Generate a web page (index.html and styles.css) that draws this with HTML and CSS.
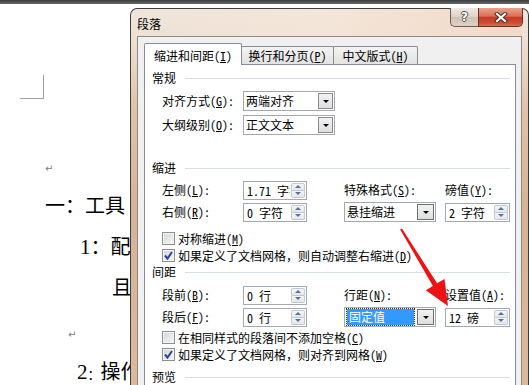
FILE: index.html
```html
<!DOCTYPE html>
<html lang="zh-CN">
<head>
<meta charset="utf-8">
<title>段落</title>
<link rel="stylesheet" href="styles.css">
</head>
<body>
<div class="topbar"></div>
<div class="desk">
  <div class="doc">
    <div class="corner"></div>
    <div class="doc-lines">
      <div class="dl l-ret1"><span class="ret">↵</span></div>
      <div class="dl l-one">一：工具</div>
      <div class="dl l-two"><span class="num">1</span>：配</div>
      <div class="dl l-three">且</div>
      <div class="dl l-ret2"><span class="ret">↵</span></div>
      <div class="dl l-four"><span class="num">2</span><span class="colon">：</span>操作</div>
    </div>
  </div>

  <div class="dialog">
    <div class="titlebar">
      <span class="title">段落</span>
      <div class="caption">
        <div class="cap-help">?</div>
        <div class="cap-close">
          <svg width="14" height="11" viewBox="0 0 14 11"><path d="M3 2 L11 9 M11 2 L3 9" stroke="#4a3a36" stroke-width="4.2" stroke-linecap="square" fill="none"/><path d="M3 2 L11 9 M11 2 L3 9" stroke="#fff" stroke-width="2" stroke-linecap="square" fill="none"/></svg>
        </div>
      </div>
    </div>
    <div class="client">
      <div class="tabs">
        <div class="tab active t1">缩进和间距(<u>I</u>)</div>
        <div class="tab t2">换行和分页(<u>P</u>)</div>
        <div class="tab t3">中文版式(<u>H</u>)</div>
      </div>
      <div class="page">
        <div class="head h1">常规</div>
        <div class="general">
          <div class="lbl">对齐方式(<u>G</u>):</div>
          <div class="combo c92"><span class="val">两端对齐</span><span class="drop"></span></div>
          <div class="lbl">大纲级别(<u>O</u>):</div>
          <div class="combo c92"><span class="val">正文文本</span><span class="drop"></span></div>
        </div>

        <div class="head h2">缩进</div>
        <div class="grid g1">
          <div class="lbl">左侧(<u>L</u>):</div>
          <div class="spin s64"><span class="val">1.71 字符</span><span class="btns"><span class="up"></span><span class="down"></span></span></div>
          <div class="lbl">特殊格式(<u>S</u>):</div>
          <div class="lbl">磅值(<u>Y</u>):</div>
          <div class="lbl">右侧(<u>R</u>):</div>
          <div class="spin s64"><span class="val">0 字符</span><span class="btns"><span class="up"></span><span class="down"></span></span></div>
          <div class="combo c92 big"><span class="val">悬挂缩进</span><span class="drop"></span></div>
          <div class="spin s65"><span class="val">2 字符</span><span class="btns"><span class="up"></span><span class="down"></span></span></div>
        </div>
        <div class="checks k1">
          <div class="check"><span class="box"></span><span>对称缩进(<u>M</u>)</span></div>
          <div class="check"><span class="box on"><svg width="11" height="11" viewBox="0 0 11 11"><path d="M2 5.5 L4.5 8.5 L9 2" stroke="#2e4793" stroke-width="2" fill="none"/></svg></span><span>如果定义了文档网格，则自动调整右缩进(<u>D</u>)</span></div>
        </div>

        <div class="head h3">间距</div>
        <div class="grid g2">
          <div class="lbl">段前(<u>B</u>):</div>
          <div class="spin s64"><span class="val">0 行</span><span class="btns"><span class="up"></span><span class="down"></span></span></div>
          <div class="lbl">行距(<u>N</u>):</div>
          <div class="lbl">设置值(<u>A</u>):</div>
          <div class="lbl">段后(<u>F</u>):</div>
          <div class="spin s64"><span class="val">0 行</span><span class="btns"><span class="up"></span><span class="down"></span></span></div>
          <div class="combo c92 big"><span class="val"><span class="sel">固定值</span></span><span class="drop"></span></div>
          <div class="spin s65"><span class="val">12 磅</span><span class="btns"><span class="up"></span><span class="down"></span></span></div>
        </div>
        <div class="checks k2">
          <div class="check"><span class="box"></span><span>在相同样式的段落间不添加空格(<u>C</u>)</span></div>
          <div class="check"><span class="box on"><svg width="11" height="11" viewBox="0 0 11 11"><path d="M2 5.5 L4.5 8.5 L9 2" stroke="#2e4793" stroke-width="2" fill="none"/></svg></span><span>如果定义了文档网格，则对齐到网格(<u>W</u>)</span></div>
        </div>

        <div class="head h4">预览</div>
      </div>
    </div>
  </div>
</div>

<svg class="arrow" width="529" height="385" viewBox="0 0 529 385">
  <polygon points="400.1,229.5 401.9,228.5 437.1,283.3 444.5,279 448,306 425.8,290.3 432.9,285.9" fill="#ee1212"/>
</svg>
</body>
</html>
```

FILE: styles.css
```css
* { box-sizing: border-box; }

body {
  margin: 0;
  width: 529px;
  height: 385px;
  overflow: hidden;
  position: relative;
  background: #fff;
  color: #000;
  font-family: "Noto Sans Mono CJK SC", "Noto Sans CJK SC", "Noto Sans", sans-serif;
  font-size: 12px;
}

u { text-decoration: underline; text-underline-offset: 1px; }

.topbar {
  height: 4px;
  background: linear-gradient(#3c3c3c, #666);
}

.desk {
  display: flex;
  height: 381px;
}

/* ---------- document behind ---------- */
.doc {
  width: 130px;
  flex: none;
  overflow: hidden;
  padding-top: 71px;
}

.corner {
  margin-left: 20px;
  width: 24px;
  height: 24px;
  border-right: 1px solid #a0a0a0;
  border-bottom: 1px solid #a0a0a0;
}

.doc-lines {
  margin-top: 44px;
  font-family: "Noto Sans CJK SC", serif;
  font-size: 20px;
  line-height: 41px;
  white-space: nowrap;
}

.dl { height: 41px; }
.num { font-family: "Liberation Serif", serif; font-size: 21px; }
.colon { font-size: 13px; }
.ret { font-family: "DejaVu Sans", sans-serif; font-size: 10px; color: #7c7c7c; }

.l-ret1 { padding-left: 45px; }
.l-one { padding-left: 45px; }
.l-two { padding-left: 80px; }
.l-three { padding-left: 112px; }
.l-ret2 { padding-left: 68px; padding-top: 2px; }
.l-four { padding-left: 77px; padding-top: 2px; }

/* ---------- dialog ---------- */
.dialog {
  width: 399px;
  flex: none;
  margin-top: 4px;
  border: 1px solid #3d3d3d;
  border-bottom: 0;
  border-radius: 7px 7px 0 0;
  padding: 0 6px;
  display: flex;
  flex-direction: column;
  background: linear-gradient(180deg, #eee5dc 0, #efe1d4 28px, #e0c3a7 100px, #d6b394 200px, #dbb99b 100%);
}

.titlebar {
  height: 27px;
  flex: none;
  display: flex;
  justify-content: space-between;
  align-items: flex-start;
  background: linear-gradient(90deg, rgba(255,255,255,0) 0, rgba(246,230,216,0.6) 50%, rgba(244,214,194,0.7) 100%);
}

.title {
  line-height: 27px;
  padding-top: 1px;
  font-size: 12px;
}

.caption {
  display: flex;
  margin-top: -1px;
  margin-right: -1px;
}

.cap-help {
  width: 28px;
  height: 19px;
  border: 1px solid #6a5b50;
  border-right: 0;
  border-top: 0;
  border-radius: 0 0 0 5px;
  background: linear-gradient(#f1e9e2, #ddd2c7 48%, #cfc2b5 52%, #ddd1c5);
  display: flex;
  align-items: center;
  justify-content: center;
  font-family: "DejaVu Sans", sans-serif;
  font-weight: bold;
  font-size: 12px;
  color: #fff;
  text-shadow: 1px 0 #505050, -1px 0 #505050, 0 1px #505050, 0 -1px #505050;
}

.cap-close {
  width: 45px;
  height: 19px;
  border: 1px solid #5a3329;
  border-top: 0;
  border-radius: 0 0 5px 0;
  background: linear-gradient(#eaa28c, #da7258 45%, #c73c22 52%, #cc4a30 80%, #da6e4f);
  display: flex;
  align-items: center;
  justify-content: center;
}

.client {
  flex: 1;
  background: #f0f0f0;
  border: 1px solid #8a8a8a;
  border-bottom: 0;
  padding: 6px 5px 0 6px;
  display: flex;
  flex-direction: column;
}

.tabs {
  display: flex;
  align-items: flex-end;
  height: 21px;
  flex: none;
  position: relative;
  z-index: 1;
}

.tab {
  height: 18px;
  border: 1px solid #898c95;
  border-bottom: 0;
  background: linear-gradient(#f3f3f3, #e2e2e2);
  line-height: 17px;
  text-align: center;
  white-space: nowrap;
  border-radius: 2px 2px 0 0;
}

.tab.active {
  height: 22px;
  margin-bottom: -1px;
  background: #fff;
  padding-top: 3px;
}

.t1 { width: 98px; }
.t2 { width: 93px; margin-left: -1px; }
.t3 { width: 85px; margin-left: -1px; }

.page {
  flex: 1;
  background: #fff;
  border: 1px solid #898c95;
  border-bottom: 0;
  padding: 0 5px 0 7px;
}

.head {
  display: flex;
  align-items: center;
  height: 16px;
  line-height: 16px;
}

.head::after {
  content: "";
  flex: 1;
  height: 1px;
  margin-left: 9px;
  background: #d5dfe5;
}

.h1 { margin-top: 5px; }
.h2 { margin-top: 25px; }
.h3 { margin-top: 0; }
.h4 { margin-top: 6px; }

.lbl {
  line-height: 20px;
  white-space: nowrap;
}

.general {
  margin: 5px 0 0 10px;
  display: grid;
  grid-template-columns: 81px 92px;
  grid-auto-rows: 20px;
  row-gap: 4px;
}

.grid {
  margin-left: 10px;
  display: grid;
  grid-template-columns: 81px 101px 101px 65px;
  grid-template-rows: 20px 20px;
  row-gap: 2px;
  align-items: center;
}

.g1 { margin-top: 4px; }
.g2 { margin-top: 5px; }

/* combo box */
.combo {
  height: 20px;
  border: 1px solid #a3a9b1;
  background: #fff;
  display: flex;
}

.c92 { width: 92px; }

.combo .val {
  flex: 1;
  padding: 1px 2px;
  line-height: 16px;
  white-space: nowrap;
  overflow: hidden;
}

.combo .drop {
  width: 15px;
  margin: 1px;
  border: 1px solid #8a8a8a;
  background: linear-gradient(#f2f2f2, #dedede);
  display: flex;
  align-items: center;
  justify-content: center;
}

.combo.big .drop { width: 17px; border-color: #6f6f6f; }

.combo .drop::before {
  content: "";
  border-left: 3px solid transparent;
  border-right: 3px solid transparent;
  border-top: 3px solid #000;
}

.sel {
  display: block;
  background: #3399ff;
  color: #fff;
  outline: 1px dotted #333;
  padding-left: 2px;
  line-height: 16px;
}

/* spinner */
.spin {
  height: 19px;
  border: 1px solid #a3a9b1;
  background: #fff;
  display: flex;
}

.s64 { width: 64px; }
.s65 { width: 65px; }

.spin .val {
  flex: 1;
  padding-left: 3px;
  line-height: 17px;
  white-space: nowrap;
  overflow: hidden;
}

.spin .btns {
  width: 14px;
  margin: 1px;
  display: flex;
  flex-direction: column;
}

.spin .up, .spin .down {
  flex: 1;
  border: 1px solid #c3c9d2;
  background: linear-gradient(#f6f6f6, #e4e6ea);
  display: flex;
  align-items: center;
  justify-content: center;
}

.spin .up { border-radius: 2px 2px 0 0; }
.spin .down { border-radius: 0 0 2px 2px; border-top: 0; }

.spin .up::before {
  content: "";
  border-left: 3px solid transparent;
  border-right: 3px solid transparent;
  border-bottom: 3px solid #5570a8;
}

.spin .down::before {
  content: "";
  border-left: 3px solid transparent;
  border-right: 3px solid transparent;
  border-top: 3px solid #5570a8;
}

/* checkboxes */
.checks { margin-left: 10px; }
.k1 { margin-top: 8px; }
.k2 { margin-top: 2px; }

.check {
  display: flex;
  align-items: center;
  height: 17px;
  gap: 3px;
  white-space: nowrap;
}

.box {
  width: 13px;
  height: 13px;
  flex: none;
  border: 1px solid #8e8f8f;
  background: linear-gradient(135deg, #d2d5da, #f7f7f7);
  box-shadow: inset 0 0 0 1px #f4f4f4;
  display: flex;
  align-items: center;
  justify-content: center;
}

/* annotation arrow */
.arrow {
  position: absolute;
  left: 0;
  top: 0;
  pointer-events: none;
}
```
